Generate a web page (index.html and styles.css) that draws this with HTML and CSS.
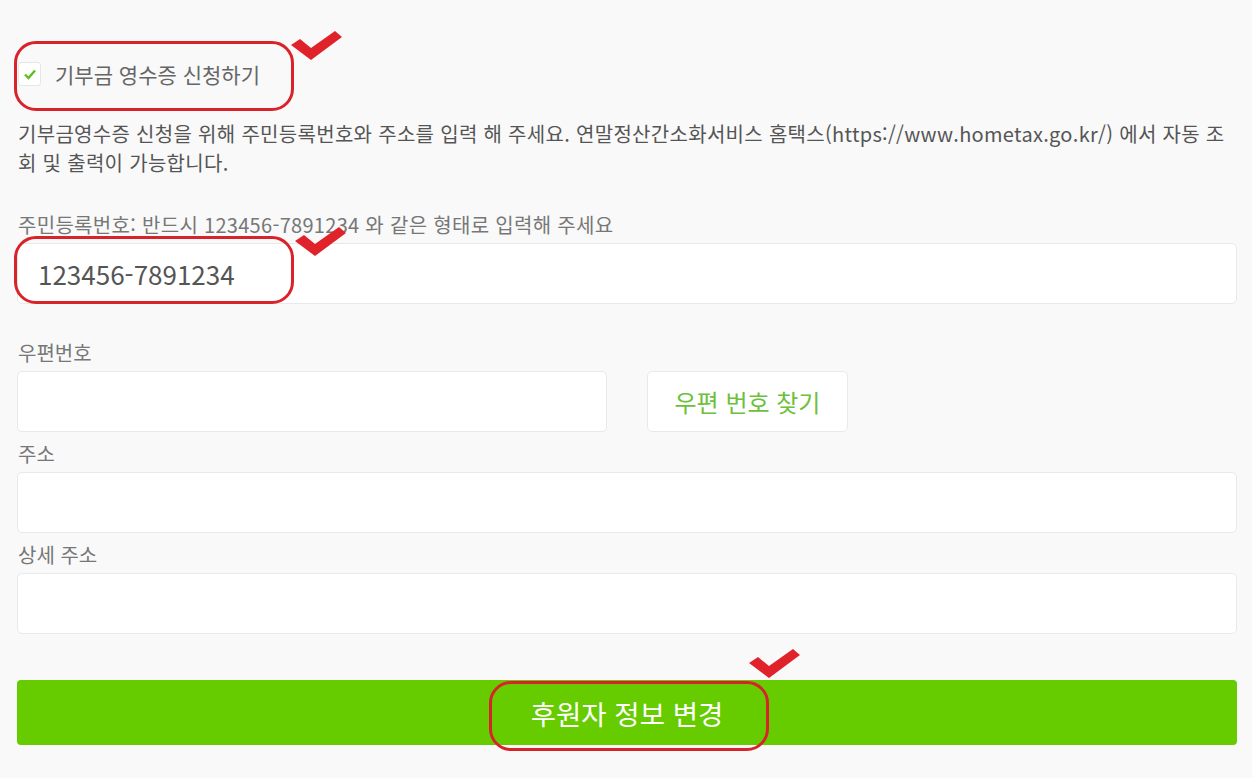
FILE: index.html
```html
<!DOCTYPE html>
<html lang="ko">
<head>
<meta charset="utf-8">
<link rel="stylesheet" href="styles.css">
</head>
<body>
<div class="page">
  <label class="check-row">
    <span class="checkbox">
      <svg width="14" height="12" viewBox="0 0 14 12"><path d="M2 6.5 L5.5 10 L12 2.5" fill="none" stroke="#5fbf1f" stroke-width="2.4"/></svg>
    </span>
    <span class="check-text">기부금 영수증 신청하기</span>
  </label>
  <p class="desc">기부금영수증 신청을 위해 주민등록번호와 주소를 입력 해 주세요. 연말정산간소화서비스 홈택스(https://www.hometax.go.kr/) 에서 자동 조회 및 출력이 가능합니다.</p>

  <div class="field-label first long">주민등록번호: 반드시 123456-7891234 와 같은 형태로 입력해 주세요</div>
  <div class="input"><span class="value">123456-7891234</span></div>

  <div class="field-label gap-lg">우편번호</div>
  <div class="postal-row">
    <div class="input postal"></div>
    <div class="postal-btn">우편 번호 찾기</div>
  </div>

  <div class="field-label gap-sm">주소</div>
  <div class="input"></div>

  <div class="field-label gap-sm">상세 주소</div>
  <div class="input"></div>

  <div class="submit">후원자 정보 변경</div>

  <div class="mark mark-1"></div>
  <div class="mark mark-2"></div>
  <div class="mark mark-3"></div>
  <svg class="tick tick-1" width="52" height="31" viewBox="0 0 52 31"><polygon points="1,15 10,9 21,18 45,1 52,7 21,30" fill="#e0232b"/></svg>
  <svg class="tick tick-2" width="52" height="31" viewBox="0 0 52 31"><polygon points="1,15 10,9 21,18 45,1 52,7 21,30" fill="#e0232b"/></svg>
  <svg class="tick tick-3" width="52" height="31" viewBox="0 0 52 31"><polygon points="1,15 10,9 21,18 45,1 52,7 21,30" fill="#e0232b"/></svg>
</div>
</body>
</html>
```

FILE: styles.css
```css
html, body {
  margin: 0;
  background: #f9f9f9;
}
body {
  font-family: "Noto Sans CJK KR", "Noto Sans", sans-serif;
  color: #666;
}
.page {
  position: relative;
  padding: 61px 15px 0 17px;
  height: 717px;
}
.check-row {
  display: flex;
  align-items: center;
  gap: 14px;
  height: 26px;
  margin-left: 1px;
}
.checkbox {
  width: 23px;
  height: 24px;
  box-sizing: border-box;
  border: 1px solid #e6e6e6;
  border-radius: 3px;
  background: #fff;
  display: flex;
  align-items: center;
  justify-content: center;
}
.check-text {
  font-size: 21px;
  color: #666;
  line-height: 26px;
}
.desc {
  margin: 32px 0 0 1px;
  font-size: 20px;
  line-height: 29px;
  letter-spacing: 0.3px;
  color: #555;
}
.field-label {
  font-size: 20px;
  line-height: 26px;
  color: #777;
  margin-left: 1px;
}
.field-label.long { letter-spacing: 0.3px; }
.field-label.first { margin-top: 35px; }
.field-label.gap-lg { margin-top: 36px; }
.field-label.gap-sm { margin-top: 9px; }
.input {
  margin-top: 5px;
  height: 61px;
  box-sizing: border-box;
  background: #fff;
  border: 1px solid #e9e9e9;
  border-radius: 5px;
  display: flex;
  align-items: center;
  padding-left: 20px;
}
.value {
  font-size: 26px;
  color: #555;
}
.postal-row {
  display: flex;
  gap: 40px;
  margin-top: 5px;
}
.postal-row .input {
  margin-top: 0;
  width: 590px;
}
.postal-btn {
  width: 201px;
  height: 61px;
  box-sizing: border-box;
  background: #fff;
  border: 1px solid #e9e9e9;
  border-radius: 5px;
  display: flex;
  align-items: center;
  justify-content: center;
  font-size: 24px;
  color: #6cc03a;
}
.submit {
  margin-top: 46px;
  height: 65px;
  border-radius: 4px;
  background: #66cc00;
  color: #fff;
  font-size: 27.5px;
  display: flex;
  align-items: center;
  justify-content: center;
}
.mark {
  position: absolute;
  border: 3px solid #d9232b;
  border-radius: 22px;
  box-sizing: border-box;
  width: 280px;
}
.mark-1 { left: 14px; top: 41px; height: 70px; }
.mark-2 { left: 14px; top: 236px; height: 68px; }
.mark-3 { left: 489px; top: 681px; height: 70px; }
.tick { position: absolute; }
.tick-1 { left: 290px; top: 30px; }
.tick-2 { left: 294px; top: 226px; }
.tick-3 { left: 748px; top: 648px; }
```
